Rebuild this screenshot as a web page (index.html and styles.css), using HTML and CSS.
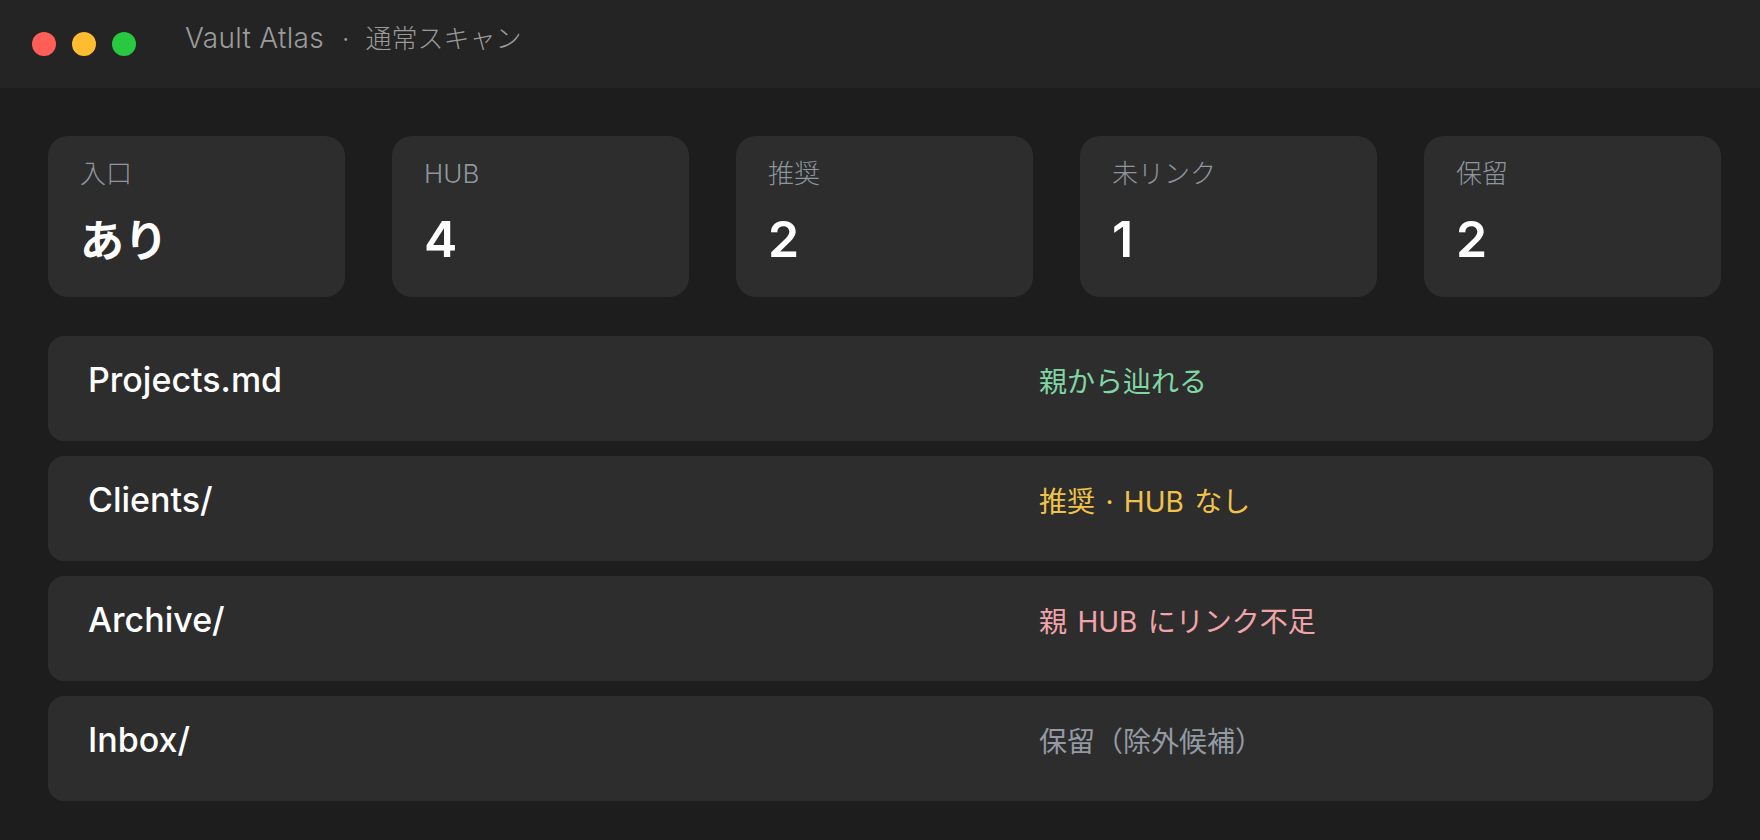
FILE: index.html
```html
<!DOCTYPE html>
<html lang="ja">
<head>
<meta charset="utf-8">
<title>Vault Atlas</title>
<link rel="stylesheet" href="styles.css">
</head>
<body>
<div class="window">
  <header class="titlebar">
    <div class="lights">
      <span class="light red"></span>
      <span class="light yellow"></span>
      <span class="light green"></span>
    </div>
    <div class="title"><span class="brand">Vault Atlas</span><span class="sep">·</span>通常スキャン</div>
  </header>
  <main class="content">
    <section class="stats">
      <div class="stat"><div class="stat-label">入口</div><div class="stat-value"><span class="kana">あり</span></div></div>
      <div class="stat"><div class="stat-label">HUB</div><div class="stat-value">4</div></div>
      <div class="stat"><div class="stat-label">推奨</div><div class="stat-value">2</div></div>
      <div class="stat"><div class="stat-label">未リンク</div><div class="stat-value">1</div></div>
      <div class="stat"><div class="stat-label">保留</div><div class="stat-value">2</div></div>
    </section>
    <section class="rows">
      <div class="row"><div class="row-name">Projects.md</div><div class="row-status ok">親から辿れる</div></div>
      <div class="row"><div class="row-name">Clients/</div><div class="row-status warn">推奨 · HUB なし</div></div>
      <div class="row"><div class="row-name">Archive/</div><div class="row-status bad">親 HUB にリンク不足</div></div>
      <div class="row"><div class="row-name">Inbox/</div><div class="row-status hold">保留（除外候補）</div></div>
    </section>
  </main>
</div>
</body>
</html>
```

FILE: styles.css
```css
* { box-sizing: border-box; }
html, body {
  margin: 0;
  padding: 0;
  background: #1d1d1d;
  font-family: Inter, "Noto Sans CJK JP", sans-serif;
}
.window {
  width: 1760px;
  height: 840px;
  background: #1d1d1d;
  overflow: hidden;
}
.titlebar {
  height: 88px;
  background: #242424;
  display: flex;
  align-items: flex-start;
  padding-left: 32px;
}
.lights {
  display: flex;
  gap: 16px;
  margin-top: 32px;
}
.light {
  width: 24px;
  height: 24px;
  border-radius: 50%;
  display: block;
}
.red { background: #ff5f57; }
.yellow { background: #febc2e; }
.green { background: #28c840; }
.title {
  margin-left: 49px;
  margin-top: 20px;
  font-size: 26px;
  line-height: 36px;
  font-weight: 300;
  color: #9b9b9b;
  white-space: nowrap;
}
.brand {
  font-size: 28px;
  letter-spacing: 0.3px;
}
.sep { margin: 0 16px 0 18px; }
.content {
  padding: 48px 48px 0 48px;
}
.stats {
  display: grid;
  grid-template-columns: repeat(5, 297px);
  gap: 47px;
}
.stat {
  background: #2d2d2d;
  border-radius: 20px;
  height: 161px;
  padding: 22px 32px 0 32px;
}
.stat-label {
  font-size: 26px;
  line-height: 32px;
  font-weight: 300;
  color: #8f959d;
}
.stat-value {
  margin-top: 19px;
  font-size: 50px;
  line-height: 60px;
  font-weight: 600;
  color: #ffffff;
}
.kana {
  font-size: 44px;
}
.rows {
  margin-top: 39px;
  width: 1665px;
  display: flex;
  flex-direction: column;
  gap: 15px;
}
.row {
  background: #2d2d2d;
  border-radius: 16px;
  height: 105px;
  padding: 22px 40px 0 40px;
  display: flex;
  align-items: baseline;
}
.row-name {
  width: 951px;
  font-size: 34px;
  line-height: 44px;
  font-weight: 500;
  color: #ffffff;
}
.row-status {
  font-size: 28px;
  line-height: 40px;
  font-weight: 400;
  word-spacing: 2.5px;
}
.ok { color: #7fd6a2; }
.warn { color: #f0c24a; }
.bad { color: #f0a3a8; }
.hold { color: #939aa3; }
```
